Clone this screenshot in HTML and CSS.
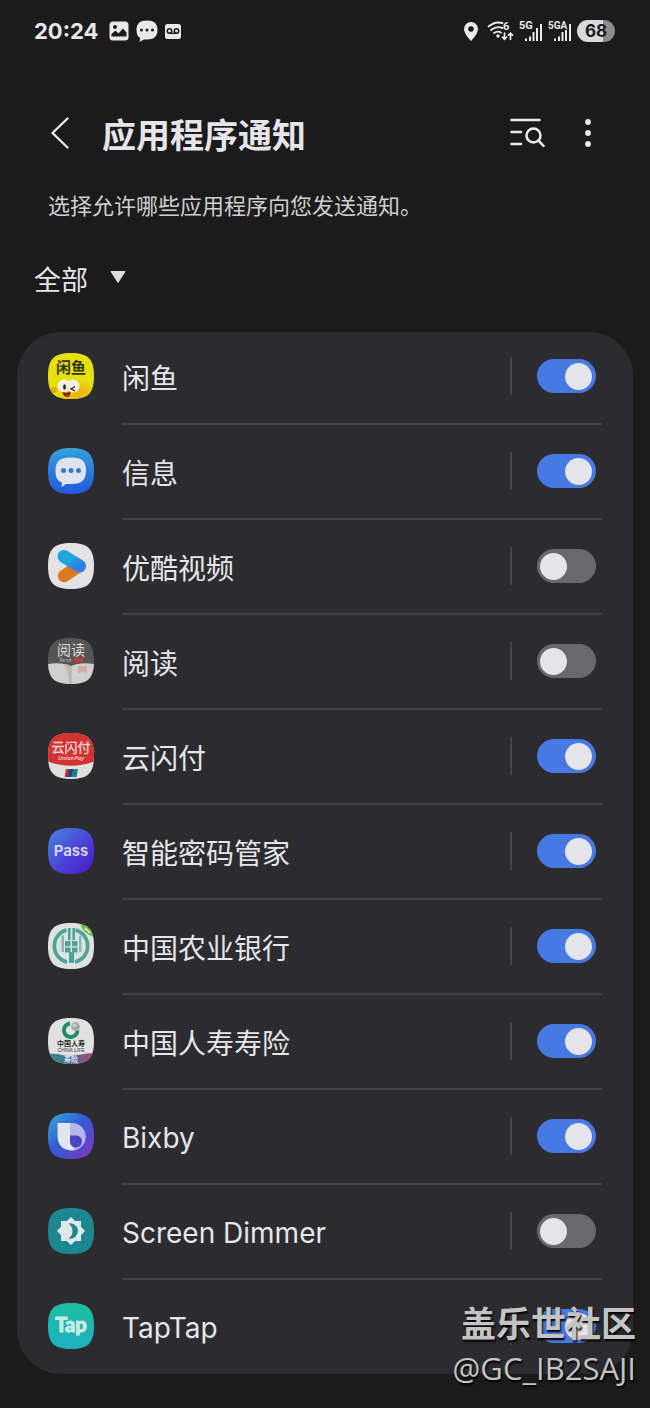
FILE: index.html
```html
<!DOCTYPE html>
<html lang="zh-CN">
<head>
    <meta charset="UTF-8">
    <meta name="viewport" content="width=device-width, initial-scale=1.0">
    <title>应用程序通知</title>
    <link rel="stylesheet" href="styles.css">
</head>
<body>
    <div class="status-bar">
        <div class="status-left">
            <span class="clock">20:24</span>
            <svg width="20" height="20" viewBox="0 0 20 20">
                <rect x="0.5" y="0.5" width="19" height="19" rx="3.5" fill="#e9e9e9"/>
                <circle cx="6" cy="6" r="2" fill="#1b1b1b"/>
                <path d="M2.500 15.500V13l4-3.500 3 3 4.500-5 3.500 4v4z" fill="#1b1b1b"/>
            </svg>
            <svg width="22" height="22" viewBox="0 0 22 22">
                <path d="M11 0.500C18 0.500 21.500 3.500 21.500 10S18 19.500 11 19.500H8L3.500 21.700 4.200 18C1.500 16.500 0.500 14 0.500 10 0.500 3.500 4 0.500 11 0.500z" fill="#e9e9e9"/>
                <circle cx="5.500" cy="10" r="1.500" fill="#1b1b1b"/>
                <circle cx="11" cy="10" r="1.500" fill="#1b1b1b"/>
                <circle cx="16.500" cy="10" r="1.500" fill="#1b1b1b"/>
            </svg>
            <svg width="16" height="15" viewBox="0 0 16 15">
                <rect width="16" height="15" rx="2.500" fill="#e9e9e9"/>
                <g fill="none" stroke="#1b1b1b" stroke-width="1.500">
                    <circle cx="4.500" cy="7" r="2.200"/>
                    <circle cx="11.500" cy="7" r="2.200"/>
                    <path d="M4.500 9.300h7"/>
                </g>
            </svg>
        </div>
        <div class="status-right">
            <svg width="14" height="19" viewBox="0 0 14 19">
                <path d="M7 0a7 7 0 0 1 7 7c0 5-7 12-7 12S0 12 0 7a7 7 0 0 1 7-7z" fill="#e9e9e9"/>
                <circle cx="7" cy="7" r="2.800" fill="#1b1b1b"/>
            </svg>
            <svg class="wifi" width="27" height="26" viewBox="0 -2 27 26">
                <g fill="none" stroke="#e9e9e9" stroke-width="1.900" stroke-linecap="round">
                    <path d="M1.500 6.500Q8 1 15.500 3"/>
                    <path d="M4 10Q9.500 5.500 15.500 8"/>
                    <path d="M7 13Q10.500 10.500 14 12.500"/>
                    <path d="M17.500 13v6M15.500 17.200l2 2 2-2" stroke-width="1.700"/>
                    <path d="M23.500 19.200v-6M21.500 15.200l2-2 2 2" stroke-width="1.700"/>
                </g>
                <circle cx="11" cy="16" r="1.700" fill="#e9e9e9"/>
                <text x="16" y="10" class="net">6</text>
            </svg>
            <svg width="24" height="28" viewBox="0 -3 24 28">
                <text x="0" y="9" class="net">5G</text>
                <path d="M6 18.500h2V21H6zM10 16.500h2V21h-2zM13.500 12h2v9h-2zM17 8h2v13h-2zM21 4h2v17h-2z" fill="#e9e9e9"/>
            </svg>
            <svg width="24" height="28" viewBox="0 -3 24 28">
                <text x="0" y="9" class="net net-long">5GA</text>
                <path d="M6 18.500h2V21H6zM10 16.500h2V21h-2zM13.500 12h2v9h-2zM17 10h2v11h-2zM21 4h2v17h-2z" fill="#e9e9e9"/>
            </svg>
            <span class="battery">68</span>
        </div>
    </div>

    <header class="top-bar">
        <button type="button" class="icon-button" aria-label="返回">
            <svg width="20" height="34" viewBox="0 0 20 34">
                <path d="M17.500 2.500L2.500 17l15 14.500" fill="none" stroke="#e9e9e9" stroke-width="2.400" stroke-linecap="round" stroke-linejoin="round"/>
            </svg>
        </button>
        <h1>应用程序通知</h1>
        <button type="button" class="icon-button search" aria-label="搜索">
            <svg width="36" height="30" viewBox="0 0 36 30">
                <g fill="none" stroke="#e9e9e9" stroke-width="2.600" stroke-linecap="round">
                    <path d="M1.500 2h28M1.500 14h9.500M1.500 26h9.500"/>
                    <circle cx="23.500" cy="17.500" r="7"/>
                    <path d="M28.800 22.800l4.700 5"/>
                </g>
            </svg>
        </button>
        <button type="button" class="icon-button" aria-label="更多选项">
            <svg width="8" height="28" viewBox="0 0 8 28">
                <g fill="#e9e9e9">
                    <circle cx="4" cy="3" r="2.900"/>
                    <circle cx="4" cy="14" r="2.900"/>
                    <circle cx="4" cy="25" r="2.900"/>
                </g>
            </svg>
        </button>
    </header>

    <p class="description">选择允许哪些应用程序向您发送通知。</p>

    <div class="filter">
        <select aria-label="筛选">
            <option>全部</option>
        </select>
        <svg width="16" height="12" viewBox="0 0 16 12">
            <path d="M1 0.500h14L8 11.500z" fill="#dcdcdc" stroke="#dcdcdc" stroke-linejoin="round"/>
        </svg>
    </div>

    <!-- shared shape and colours of the app icons -->
    <svg class="defs" width="0" height="0">
        <defs>
            <clipPath id="squircle">
                <path d="M23 0C40 0 46 6 46 23S40 46 23 46 0 40 0 23 6 0 23 0z"/>
            </clipPath>
            <linearGradient id="msgBg" x1="0" y1="0" x2="0" y2="1">
                <stop offset="0" stop-color="#35a0dc"/>
                <stop offset="1" stop-color="#2458dc"/>
            </linearGradient>
            <linearGradient id="passBg" x1="0" y1="0" x2="1" y2="1">
                <stop offset="0" stop-color="#4a86dc"/>
                <stop offset="0.500" stop-color="#4a48d8"/>
                <stop offset="1" stop-color="#4c14c4"/>
            </linearGradient>
            <linearGradient id="bixbyBg" x1="0" y1="0" x2="1" y2="1">
                <stop offset="0.100" stop-color="#369bd8"/>
                <stop offset="0.450" stop-color="#315bd4"/>
                <stop offset="1" stop-color="#8434c4"/>
            </linearGradient>
            <linearGradient id="tapBg" x1="0" y1="0" x2="0" y2="1">
                <stop offset="0" stop-color="#1cbf9d"/>
                <stop offset="1" stop-color="#1eb0c2"/>
            </linearGradient>
            <linearGradient id="youkuBlue" x1="0" y1="0" x2="1" y2="1">
                <stop offset="0.400" stop-color="#1ea4de"/>
                <stop offset="1" stop-color="#2b7fe0"/>
            </linearGradient>
            <linearGradient id="lifeBg" x1="0" y1="0" x2="1" y2="0">
                <stop offset="0" stop-color="#2d8f7e"/>
                <stop offset="0.500" stop-color="#4a6f9c"/>
                <stop offset="1" stop-color="#b0426c"/>
            </linearGradient>
            <radialGradient id="fishBg" cx="0.600" cy="0.800" r="0.600">
                <stop offset="0" stop-color="#f0b010"/>
                <stop offset="0.600" stop-color="#ecc912"/>
                <stop offset="1" stop-color="#e6e010"/>
            </radialGradient>
        </defs>
    </svg>

    <ul class="app-list">
        <li>
            <svg class="app-icon" viewBox="0 0 46 46">
                <g clip-path="url(#squircle)">
                    <rect width="46" height="46" fill="#e6e010"/>
                    <path d="M8 46C8 30 14 23 24 23c5 0 6-2 9-1l2 2 3 1 1 3 3 2 0 4 3 3-2 9z" fill="url(#fishBg)"/>
                    <circle cx="6" cy="37" r="3" fill="#eba313"/>
                    <circle cx="16" cy="33" r="6.500" fill="#f2f0e4"/>
                    <circle cx="25" cy="33" r="6.500" fill="#f2f0e4"/>
                    <ellipse cx="16.500" cy="34" rx="1.400" ry="2.800" fill="#2b2518"/>
                    <path d="M27 33.500l-4 2.500 4 2" fill="none" stroke="#2b2518" stroke-width="1.300"/>
                    <path d="M14.500 39q5 1.500 8-0.500 0 6-4 5.500-3.500-1-4-5z" fill="#7a2012"/>
                    <path d="M17 42q2-1 4 0-1.500 2-4 0z" fill="#e0402c"/>
                </g>
                <text x="8" y="20" class="glyph fish-text">闲鱼</text>
            </svg>
            <div class="app-row">
                <label for="app1">闲鱼</label>
                <input type="checkbox" id="app1" class="switch" checked>
            </div>
        </li>
        <li>
            <svg class="app-icon" viewBox="0 0 46 46">
                <g clip-path="url(#squircle)">
                    <rect width="46" height="46" fill="url(#msgBg)"/>
                    <path d="M23 9.500C34 9.500 38 13 38 22.500S34 36 23 36h-5l-4.500 3 0.500-4.500C9 32.500 7.500 29 7.500 22.500 7.500 13 12 9.500 23 9.500z" fill="#dfe4ec"/>
                    <circle cx="15.500" cy="22.500" r="2.500" fill="#3a78cc"/>
                    <circle cx="23" cy="22.500" r="2.500" fill="#3a78cc"/>
                    <circle cx="30.500" cy="22.500" r="2.500" fill="#3a78cc"/>
                </g>
            </svg>
            <div class="app-row">
                <label for="app2">信息</label>
                <input type="checkbox" id="app2" class="switch" checked>
            </div>
        </li>
        <li>
            <svg class="app-icon" viewBox="0 0 46 46">
                <g clip-path="url(#squircle)">
                    <rect width="46" height="46" fill="#e3e3e5"/>
                    <path d="M16 33L31 23" fill="none" stroke="#dc7a1e" stroke-width="12.500" stroke-linecap="round"/>
                    <path d="M16 13.500L31.500 23" fill="none" stroke="url(#youkuBlue)" stroke-width="13" stroke-linecap="round"/>
                </g>
            </svg>
            <div class="app-row">
                <label for="app3">优酷视频</label>
                <input type="checkbox" id="app3" class="switch">
            </div>
        </li>
        <li>
            <svg class="app-icon" viewBox="0 0 46 46">
                <g clip-path="url(#squircle)">
                    <rect width="46" height="46" fill="#555555"/>
                    <path d="M0 26Q14 24 23 28 32 24 46 26V46H0z" fill="#d2d0cf"/>
                    <path d="M23 28Q20 26.500 15 26 20 30 21 46h2z" fill="#bdbbba"/>
                    <path d="M23 28v17" stroke="#b0aead"/>
                    <path d="M30 28h9v8l-4.500-3-4.500 3z" fill="#dba9a6"/>
                    <rect x="26" y="20" width="9" height="4" rx="0.500" fill="#c2393b"/>
                    <text x="11.500" y="23.800" class="glyph read-latin">Read</text>
                </g>
                <text x="9" y="16.500" class="glyph read-text">阅读</text>
            </svg>
            <div class="app-row">
                <label for="app4">阅读</label>
                <input type="checkbox" id="app4" class="switch">
            </div>
        </li>
        <li>
            <svg class="app-icon" viewBox="0 0 46 46">
                <g clip-path="url(#squircle)">
                    <rect width="46" height="46" fill="#dfdfdf"/>
                    <path d="M0 0h46v28.500Q23 37 0 28.500z" fill="#d23230"/>
                    <path d="M18 36h6l-1.500 8h-6z" fill="#c4303c"/>
                    <path d="M21 36h6l-1.500 8h-6z" fill="#24447c"/>
                    <path d="M25 36h5l-1.500 8h-5z" fill="#128482"/>
                </g>
                <text x="23" y="19" class="glyph union-text">云闪付</text>
                <text x="23" y="27" class="glyph union-latin">UnionPay</text>
            </svg>
            <div class="app-row">
                <label for="app5">云闪付</label>
                <input type="checkbox" id="app5" class="switch" checked>
            </div>
        </li>
        <li>
            <svg class="app-icon" viewBox="0 0 46 46">
                <rect width="46" height="46" fill="url(#passBg)" clip-path="url(#squircle)"/>
                <text x="23" y="28" class="glyph pass-text">Pass</text>
            </svg>
            <div class="app-row">
                <label for="app6">智能密码管家</label>
                <input type="checkbox" id="app6" class="switch" checked>
            </div>
        </li>
        <li>
            <svg class="app-icon" viewBox="0 0 46 46">
                <g clip-path="url(#squircle)">
                    <rect width="46" height="46" fill="#e0e2e1"/>
                    <path d="M18.500 7A16.500 16.500 0 0 0 19 39M27.500 7A16.500 16.500 0 0 1 27 39" fill="none" stroke="#4da396" stroke-width="3.600"/>
                    <path d="M20 5h2.600v12H20zM24.400 5H27v12h-2.600z" fill="#4da396"/>
                    <path d="M13.500 12.500h2.500V29h-2.500zM31 12.500h2.500V29H31z" fill="#7fbcb2"/>
                    <path d="M17 18h5.500v5.200H17zM24 18h5.500v5.200H24zM17 24.500h5.500v5H17zM24 24.500h5.500v5H24z" fill="#4da396"/>
                    <path d="M21 29h5v11h-5z" fill="#4da396"/>
                    <path d="M32 0q2 10 14 14V0z" fill="#70b83c"/>
                    <path d="M37 5l5 5" stroke="#d7e8c9" stroke-width="2"/>
                </g>
            </svg>
            <div class="app-row">
                <label for="app7">中国农业银行</label>
                <input type="checkbox" id="app7" class="switch" checked>
            </div>
        </li>
        <li>
            <svg class="app-icon" viewBox="0 0 46 46">
                <g clip-path="url(#squircle)">
                    <rect width="46" height="46" fill="#e1e1e1"/>
                    <path d="M0 36Q8 35 14 37T30 37 46 35V46H0z" fill="url(#lifeBg)"/>
                    <path d="M22 5.500a6.800 6.800 0 1 0 7.500 7" fill="none" stroke="#1d8e68" stroke-width="4"/>
                    <circle cx="27.500" cy="8.500" r="4.300" fill="#a3a6a6"/>
                    <circle cx="26.500" cy="7.500" r="2" fill="#cccccc"/>
                </g>
                <text x="23" y="28" class="glyph life-text">中国人寿</text>
                <text x="23" y="34" class="glyph life-latin">CHINA LIFE</text>
                <text x="23" y="44" class="glyph life-tag">寿险</text>
            </svg>
            <div class="app-row">
                <label for="app8">中国人寿寿险</label>
                <input type="checkbox" id="app8" class="switch" checked>
            </div>
        </li>
        <li>
            <svg class="app-icon" viewBox="0 0 46 46">
                <g clip-path="url(#squircle)">
                    <rect width="46" height="46" fill="url(#bixbyBg)"/>
                    <path d="M22 10h2a13.500 13.500 0 0 1 0 27.500h-2z" fill="#b3b8ec"/>
                    <path d="M9.500 10H22v13q-1 9 5 14Q9.500 39 9.500 22z" fill="#e2e6ec"/>
                    <path d="M22 22.500h6.500a6 6 0 1 1-6.500 6z" fill="#4a46c2"/>
                </g>
            </svg>
            <div class="app-row">
                <label for="app9" lang="en">Bixby</label>
                <input type="checkbox" id="app9" class="switch" checked>
            </div>
        </li>
        <li>
            <svg class="app-icon" viewBox="0 0 46 46">
                <g clip-path="url(#squircle)">
                    <rect width="46" height="46" fill="#1c8790"/>
                    <path d="M23 9l4.200 4H33v5.800L37 23l-4 4.200V33h-5.800L23 37l-4.200-4H13v-5.800L9 23l4-4.200V13h5.800z" fill="#e1e6e6"/>
                    <path d="M20.500 15.500a7.700 7.700 0 1 1 0 15q4-3 4-7.500t-4-7.500z" fill="#1c8790"/>
                </g>
            </svg>
            <div class="app-row">
                <label for="app10" lang="en">Screen Dimmer</label>
                <input type="checkbox" id="app10" class="switch">
            </div>
        </li>
        <li>
            <svg class="app-icon" viewBox="0 0 46 46">
                <rect width="46" height="46" fill="url(#tapBg)" clip-path="url(#squircle)"/>
                <text x="23" y="29" class="glyph tap-text">Tap</text>
            </svg>
            <div class="app-row">
                <label for="app11" lang="en">TapTap</label>
                <input type="checkbox" id="app11" class="switch" checked>
            </div>
        </li>
    </ul>

    <div class="watermark">
        <strong>盖乐世社区</strong>
        <span>@GC_IB2SAJI</span>
    </div>
</body>
</html>
```

FILE: styles.css
```css
* {
    box-sizing: border-box;
}
body {
    position: relative;
    margin: 0;
    padding-bottom: 34px;
    background-color: #1b1b1b;
    color: #e6e6ea;
    font-family: Roboto, "Noto Sans CJK SC", sans-serif;
}
svg {
    display: block;
    flex-shrink: 0;
}
.defs {
    position: absolute;
}

/* status bar */
.status-bar {
    display: flex;
    justify-content: space-between;
    align-items: center;
    height: 62px;
    padding: 0 35px 0 34px;
}
.status-left {
    display: flex;
    align-items: center;
    gap: 7px;
}
.clock {
    margin-right: 4px;
    font-family: Inter, sans-serif;
    font-size: 22px;
    font-weight: 700;
}
.status-right {
    display: flex;
    align-items: center;
    gap: 5px;
}
.wifi {
    margin-left: 4px;
}
.net {
    font-family: Roboto, sans-serif;
    font-size: 11px;
    font-weight: 700;
    fill: #e9e9e9;
}
.net-long {
    font-size: 10px;
}
.battery {
    width: 38px;
    border-radius: 11px;
    background: linear-gradient(to right, #dadada 68%, #8c8c8c 68%);
    color: #1b1b1b;
    font-family: Inter, sans-serif;
    font-size: 17px;
    font-weight: 700;
    line-height: 22px;
    text-align: center;
}

/* title row */
.top-bar {
    display: flex;
    align-items: center;
    height: 72px;
    margin-top: 35px;
    padding: 0 58px 0 50px;
}
.icon-button {
    padding: 0;
    border: none;
    background: none;
    cursor: pointer;
}
h1 {
    flex: 1;
    margin: 0 0 0 32px;
    padding-top: 6px;
    font-size: 34px;
    font-weight: 700;
    line-height: 44px;
}
.search {
    margin-right: 38px;
}
.description {
    margin: 20px 48px 0;
    color: #cfcfd1;
    font-size: 22px;
    line-height: 36px;
}
.filter {
    display: flex;
    align-items: center;
    gap: 22px;
    height: 60px;
    margin: 22px 34px 0;
}
.filter select {
    padding: 4px 0 0;
    border: none;
    background: none;
    color: #e6e6ea;
    font-family: "Noto Sans CJK SC", sans-serif;
    font-size: 27px;
    line-height: 40px;
    appearance: none;
}

/* app list */
.app-list {
    margin: 25px 17px 0;
    padding: 0 31px;
    border-radius: 44px;
    background-color: #2c2c30;
    list-style: none;
}
.app-list li {
    display: flex;
    gap: 28px;
    padding-top: 23px;
}
.app-list li:first-child {
    padding-top: 21px;
}
.app-icon {
    width: 46px;
    height: 46px;
}
.app-row {
    display: flex;
    flex: 1;
    align-items: center;
    height: 72px;
    padding: 0 6px 24px 0;
    border-bottom: 2px solid #434347;
}
.app-list li:last-child .app-row {
    height: 71px;
    padding-bottom: 25px;
    border-bottom: none;
}
.app-row label {
    flex: 1;
    padding-top: 8px;
    font-size: 28px;
    line-height: 38px;
}
.app-row label:lang(en) {
    padding-top: 4px;
    font-family: Inter, sans-serif;
}
.switch {
    position: relative;
    width: 59px;
    height: 34px;
    margin: 0;
    border-radius: 17px;
    background-color: #68686d;
    appearance: none;
    cursor: pointer;
}
.switch:checked {
    background-color: #467ae2;
}
.switch::before {
    content: "";
    position: absolute;
    top: 4px;
    left: 3px;
    width: 27px;
    height: 27px;
    border-radius: 50%;
    background-color: #e4e4e9;
}
.switch:checked::before {
    left: 28px;
}
.switch::after {
    content: "";
    position: absolute;
    top: -2px;
    left: -27px;
    width: 2px;
    height: 38px;
    background-color: #454549;
}

/* lettering inside the app icons */
.glyph {
    font-family: "Noto Sans CJK SC", sans-serif;
    text-anchor: middle;
}
.fish-text {
    font-size: 15px;
    font-weight: 700;
    fill: #35320c;
    text-anchor: start;
}
.read-text {
    font-size: 14px;
    fill: #dedede;
    text-anchor: start;
}
.read-latin {
    font-size: 5px;
    fill: #bcbcbc;
    text-anchor: start;
}
.union-text {
    font-size: 13px;
    fill: #f0dada;
    stroke: #f0dada;
    stroke-width: 0.3px;
}
.union-latin {
    font-family: "Open Sans", sans-serif;
    font-size: 6px;
    font-style: italic;
    font-weight: 600;
    fill: #f0dada;
}
.pass-text {
    font-family: Inter, sans-serif;
    font-size: 15px;
    font-weight: 600;
    fill: #dcdcf4;
}
.life-text {
    font-size: 7px;
    font-weight: 700;
    fill: #2b2b2b;
}
.life-latin {
    font-family: "Liberation Sans", sans-serif;
    font-size: 5px;
    fill: #3b3b3b;
}
.life-tag {
    font-size: 7px;
    font-weight: 700;
    fill: #dce4ec;
}
.tap-text {
    font-family: Lato, sans-serif;
    font-size: 20px;
    font-weight: 900;
    fill: #c4ece4;
    stroke: #c4ece4;
    stroke-width: 1px;
    stroke-linejoin: round;
}

.watermark {
    position: absolute;
    right: 14px;
    bottom: 19px;
    display: flex;
    flex-direction: column;
    align-items: flex-end;
    color: #c4c4c4;
    font-family: "Open Sans", "Noto Sans CJK SC", sans-serif;
    text-shadow: 1px 2px 2px #000;
    pointer-events: none;
}
.watermark strong {
    font-size: 35px;
    line-height: 48px;
}
.watermark span {
    font-size: 31px;
    line-height: 41px;
}
```
